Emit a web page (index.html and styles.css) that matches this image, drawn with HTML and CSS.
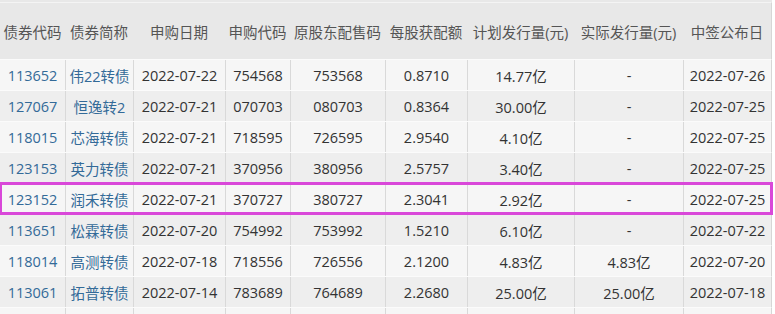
FILE: index.html
```html
<!DOCTYPE html>
<html lang="zh">
<head>
<meta charset="utf-8">
<link rel="stylesheet" href="styles.css">
</head>
<body>
<div class="grid">
  <div class="row head">
    <div class="c">债券代码</div><div class="c">债券简称</div><div class="c">申购日期</div><div class="c">申购代码</div><div class="c">原股东配售码</div><div class="c">每股获配额</div><div class="c">计划发行量(元)</div><div class="c">实际发行量(元)</div><div class="c">中签公布日</div>
  </div>
  <div class="row odd">
    <div class="c link">113652</div><div class="c link">伟22转债</div><div class="c">2022-07-22</div><div class="c">754568</div><div class="c">753568</div><div class="c">0.8710</div><div class="c">14.77亿</div><div class="c">-</div><div class="c">2022-07-26</div>
  </div>
  <div class="row even">
    <div class="c link">127067</div><div class="c link">恒逸转2</div><div class="c">2022-07-21</div><div class="c">070703</div><div class="c">080703</div><div class="c">0.8364</div><div class="c">30.00亿</div><div class="c">-</div><div class="c">2022-07-25</div>
  </div>
  <div class="row odd">
    <div class="c link">118015</div><div class="c link">芯海转债</div><div class="c">2022-07-21</div><div class="c">718595</div><div class="c">726595</div><div class="c">2.9540</div><div class="c">4.10亿</div><div class="c">-</div><div class="c">2022-07-25</div>
  </div>
  <div class="row even">
    <div class="c link">123153</div><div class="c link">英力转债</div><div class="c">2022-07-21</div><div class="c">370956</div><div class="c">380956</div><div class="c">2.5757</div><div class="c">3.40亿</div><div class="c">-</div><div class="c">2022-07-25</div>
  </div>
  <div class="row odd mark">
    <div class="c link">123152</div><div class="c link">润禾转债</div><div class="c">2022-07-21</div><div class="c">370727</div><div class="c">380727</div><div class="c">2.3041</div><div class="c">2.92亿</div><div class="c">-</div><div class="c">2022-07-25</div>
  </div>
  <div class="row even">
    <div class="c link">113651</div><div class="c link">松霖转债</div><div class="c">2022-07-20</div><div class="c">754992</div><div class="c">753992</div><div class="c">1.5210</div><div class="c">6.10亿</div><div class="c">-</div><div class="c">2022-07-22</div>
  </div>
  <div class="row odd">
    <div class="c link">118014</div><div class="c link">高测转债</div><div class="c">2022-07-18</div><div class="c">718556</div><div class="c">726556</div><div class="c">2.1200</div><div class="c">4.83亿</div><div class="c">4.83亿</div><div class="c">2022-07-20</div>
  </div>
  <div class="row even">
    <div class="c link">113061</div><div class="c link">拓普转债</div><div class="c">2022-07-14</div><div class="c">783689</div><div class="c">764689</div><div class="c">2.2680</div><div class="c">25.00亿</div><div class="c">25.00亿</div><div class="c">2022-07-18</div>
  </div>
  <div class="row odd">
    <div class="c link"></div><div class="c"></div><div class="c"></div><div class="c"></div><div class="c"></div><div class="c"></div><div class="c"></div><div class="c"></div><div class="c"></div>
  </div>
</div>
</body>
</html>
```

FILE: styles.css
```css
html, body {
  margin: 0;
  padding: 0;
  background: #ffffff;
}
body {
  font-family: "Open Sans", "Noto Sans CJK SC", sans-serif;
  font-size: 14.5px;
  color: #333333;
  overflow: hidden;
}
.grid {
  width: 772px;
  border-top: 2px solid #e8e8e8;
  background: #f4f4f4;
}
.row {
  display: grid;
  grid-template-columns: 65px 68px 92px 65px 95px 82px 107px 109px 88px;
  border-right: 1px solid #d6d6d6;
}
.head {
  height: 56px;
  background: #e8e8e8;
  border-top: 1px solid #f4f4f4;
  color: #555555;
}
.head .c {
  border-right: none;
}
.row .c {
  display: flex;
  align-items: center;
  justify-content: center;
  white-space: nowrap;
  border-left: 1px solid #d9d9d9;
}
.row .c:first-child {
  border-left: none;
}
.head .c {
  border-left: none;
}
.odd, .even {
  height: 30px;
  border-top: 1px solid #fbfbfb;
}
.odd {
  background: #f6f6f6;
}
.even {
  background: #eeeeee;
}
.link {
  color: #336a98;
}
.mark {
  outline: 3px solid #d948d9;
  outline-offset: -2px;
  position: relative;
  z-index: 1;
}
```
